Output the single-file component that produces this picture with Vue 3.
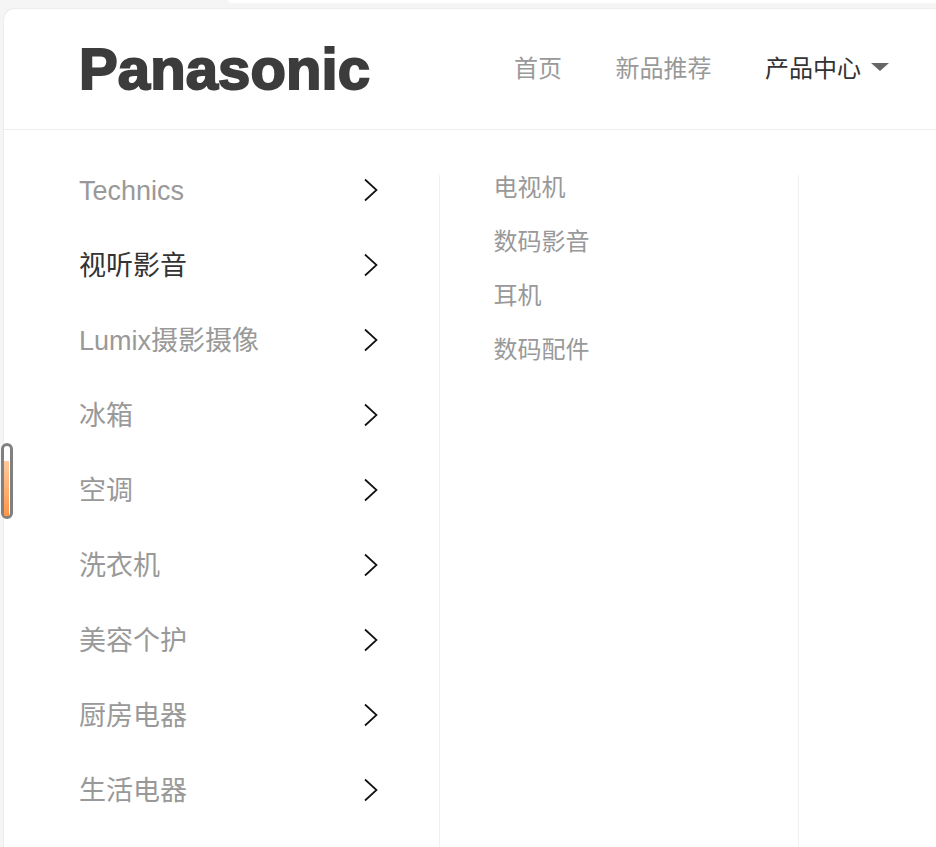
<template>
  <div class="page">
    <div class="top-strip"><div class="top-prev"></div></div>
    <div class="card">
      <header class="head">
        <div class="logo">Panasonic</div>
        <nav class="nav">
          <a v-for="n in navItems" :key="n" class="nav-item">{{ n }}</a>
          <a class="nav-item active">产品中心<i class="caret"></i></a>
        </nav>
      </header>
      <div class="body">
        <ul class="cats">
          <li v-for="c in cats" :key="c" class="cat" :class="{ active: c === current }">
            <span class="cat-name">{{ c }}</span>
            <svg class="arrow" width="14" height="24" viewBox="0 0 14 24">
              <path d="M1 1.5 L12.5 12 L1 22.5" fill="none" stroke="#111" stroke-width="1.7" />
            </svg>
          </li>
        </ul>
        <ul class="subs">
          <li v-for="s in subs" :key="s" class="sub">{{ s }}</li>
        </ul>
        <div class="rest"></div>
      </div>
    </div>
    <div class="scroll-thumb"><div class="scroll-fill"></div></div>
  </div>
</template>

<script setup>
const navItems = ['首页', '新品推荐']
const current = '视听影音'
const cats = ['Technics', '视听影音', 'Lumix摄影摄像', '冰箱', '空调', '洗衣机', '美容个护', '厨房电器', '生活电器']
const subs = ['电视机', '数码影音', '耳机', '数码配件']
</script>

<style>
html, body {
  margin: 0;
  height: 100%;
  overflow: hidden;
  background: #f5f5f5;
}
</style>

<style scoped>
.page {
  position: relative;
  height: 847px;
  overflow: hidden;
  font-family: "Liberation Sans", "Noto Sans CJK SC", sans-serif;
  color: #999;
}

.top-strip {
  height: 3px;
  padding-left: 228px;
  margin-bottom: 6px;
}

.top-prev {
  height: 3px;
  background: #fff;
  border-bottom-left-radius: 8px;
}

.card {
  margin-left: 4px;
  height: 860px;
  background: #fff;
  border-radius: 10px 0 0 0;
  box-shadow: 0 0 2px rgba(0, 0, 0, 0.12);
}

.head {
  display: flex;
  align-items: center;
  justify-content: space-between;
  height: 120px;
  padding: 0 47px 0 75px;
  border-bottom: 1px solid #eee;
}

.logo {
  font-size: 58px;
  font-weight: 700;
  line-height: 1;
  letter-spacing: 0.1px;
  color: #3c3c3c;
  -webkit-text-stroke: 2px #3c3c3c;
}

.nav {
  display: flex;
  gap: 53.5px;
  font-size: 24px;
  padding-bottom: 6px;
}

.nav-item {
  display: flex;
  align-items: center;
}

.nav-item.active {
  color: #333;
}

.caret {
  width: 0;
  height: 0;
  margin-left: 10px;
  margin-top: 2px;
  border-left: 9px solid transparent;
  border-right: 9px solid transparent;
  border-top: 8px solid #666;
}

.body {
  display: flex;
  padding-top: 45px;
}

.cats,
.subs {
  margin: 0;
  padding: 0;
  list-style: none;
}

.cats {
  box-sizing: border-box;
  width: 436px;
  padding: 0 61px 0 75px;
  border-right: 1px solid #f0f0f0;
  height: 700px;
}

.cat {
  display: flex;
  align-items: center;
  justify-content: space-between;
  height: 75px;
  position: relative;
  top: -23px;
  font-size: 27px;
  line-height: 36px;
  color: #999;
}

.cat-name {
  padding-top: 2px;
}

.cat.active {
  color: #333;
}

.subs {
  box-sizing: border-box;
  width: 359px;
  padding-left: 53.5px;
  padding-top: 1px;
  border-right: 1px solid #f0f0f0;
}

.sub {
  height: 54px;
  line-height: 24px;
  font-size: 24px;
}

.scroll-thumb {
  position: absolute;
  left: 1px;
  top: 443px;
  box-sizing: border-box;
  width: 12px;
  height: 76px;
  padding: 15px 1px 0 0;
  background: #fff;
  border: 3px solid #808080;
  border-radius: 6px;
}

.scroll-fill {
  height: 100%;
  background: linear-gradient(#ffcb9c, #ff9447);
}
</style>
